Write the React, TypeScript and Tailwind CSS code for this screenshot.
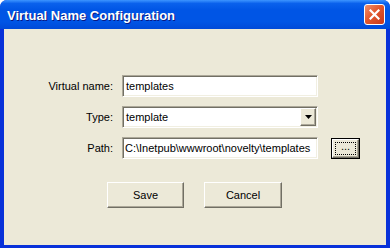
import { ReactNode } from 'react';

const font = "font-['Liberation_Sans',Arial,sans-serif]";

// classic sunken edit border
const sunken =
  'border border-t-[#aca899] border-l-[#aca899] border-b-white border-r-white shadow-[inset_1px_1px_0_#716f64,inset_-1px_-1px_0_#f1efe2] bg-white';

// classic raised button border
const raised =
  'border border-t-white border-l-white border-b-[#716f64] border-r-[#716f64] shadow-[inset_-1px_-1px_0_#aca899] bg-[#ece9d8]';

function Row({ label, children }: { label: string; children: ReactNode }) {
  return (
    <div className="flex items-center h-[22px]">
      <div className="w-[109px] text-right text-[11px] text-black">{label}</div>
      <div className="ml-[9px] flex items-center">{children}</div>
    </div>
  );
}

export default function App() {
  return (
    <div className={`w-[390px] h-[248px] bg-white ${font}`}>
      <div className="w-full h-full flex flex-col rounded-t-[7px] overflow-hidden bg-[#0831d9]">
        {/* Title bar */}
        <div className="h-[29px] shrink-0 flex items-center justify-between pl-[7px] pr-[5px] bg-[linear-gradient(to_bottom,#3d95ff_0%,#0a61ec_12%,#0055e5_35%,#0055e5_75%,#004ad8_100%)]">
          <span className="pt-[2px] text-white font-bold text-[13px] [text-shadow:1px_1px_0_#0a1883]">
            Virtual Name Configuration
          </span>
          <div className="w-[21px] h-[21px] rounded-[3px] border border-white bg-[linear-gradient(135deg,#f0906c_0%,#e2582e_45%,#c9381a_100%)] flex items-center justify-center">
            <svg width="11" height="11" viewBox="0 0 11 11">
              <path d="M1.5 1.5 L9.5 9.5 M9.5 1.5 L1.5 9.5" stroke="white" strokeWidth="2.2" strokeLinecap="square" />
            </svg>
          </div>
        </div>

        {/* Body */}
        <div className="flex-1 mx-[4px] mb-[3px] bg-[#ece9d8] pt-[46px] flex flex-col">
          <div className="flex flex-col gap-[9px]">
            <Row label="Virtual name:">
              <div className={`w-[196px] h-[22px] ${sunken} flex items-center pl-[3px] text-[11px]`}>templates</div>
            </Row>
            <Row label="Type:">
              <div className={`w-[196px] h-[22px] ${sunken} flex items-center justify-between pl-[3px] pr-[1px] text-[11px]`}>
                <span>template</span>
                <div className={`w-[16px] h-[18px] ${raised} flex items-center justify-center`}>
                  <svg width="7" height="4" viewBox="0 0 7 4">
                    <path d="M0 0 H7 L3.5 4 Z" fill="black" />
                  </svg>
                </div>
              </div>
            </Row>
            <Row label="Path:">
              <div className={`w-[196px] h-[22px] ${sunken} flex items-center pl-[2px] text-[11px] whitespace-nowrap overflow-hidden`}>
                C:\Inetpub\wwwroot\novelty\templates
              </div>
              <div className="ml-[13px] w-[29px] h-[21px] border border-black bg-[#ece9d8] flex">
                <div className={`flex-1 ${raised} flex items-center justify-center p-[2px]`}>
                  <div className="w-full h-full border border-dotted border-black flex items-end justify-center text-[11px] leading-none pb-[2px]">
                    ...
                  </div>
                </div>
              </div>
            </Row>
          </div>

          <div className="flex gap-[20px] ml-[103px] mt-[23px]">
            <div className={`w-[77px] h-[26px] ${raised} flex items-center justify-center text-[11px]`}>Save</div>
            <div className={`w-[78px] h-[26px] ${raised} flex items-center justify-center text-[11px]`}>Cancel</div>
          </div>
        </div>
      </div>
    </div>
  );
}
